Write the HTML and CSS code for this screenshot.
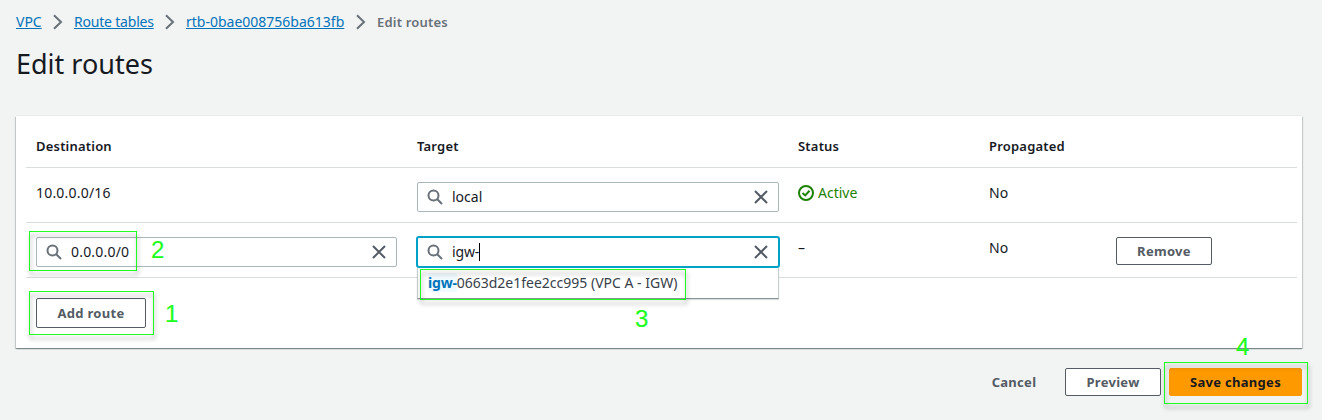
FILE: index.html
```
<!DOCTYPE html>
<html lang="en">
<head>
<meta charset="utf-8">
<title>Edit routes</title>
<link rel="stylesheet" href="styles.css">
</head>
<body>
<svg class="defs" width="0" height="0">
  <symbol id="search" viewBox="0 0 16 16"><circle cx="6.5" cy="6.5" r="5" fill="none" stroke="currentColor" stroke-width="2"/><path d="M10.3 10.3 15 15" stroke="currentColor" stroke-width="2"/></symbol>
  <symbol id="close" viewBox="0 0 16 16"><path d="M2 2 14 14M14 2 2 14" stroke="currentColor" stroke-width="2"/></symbol>
  <symbol id="chevron" viewBox="0 0 10 16"><path d="M1 1.2 8 8 1 14.8" fill="none" stroke="currentColor" stroke-width="2"/></symbol>
  <symbol id="check" viewBox="0 0 16 16"><circle cx="8" cy="8" r="7" fill="none" stroke="currentColor" stroke-width="2"/><path d="M4.5 8 7.2 10.4 11.5 5.7" fill="none" stroke="currentColor" stroke-width="2"/></symbol>
</svg>
<nav class="breadcrumbs">
  <a class="crumb vpc">VPC</a><svg class="chevron"><use href="#chevron"/></svg>
  <a class="crumb tables">Route tables</a><svg class="chevron"><use href="#chevron"/></svg>
  <a class="crumb rtb">rtb-0bae008756ba613fb</a><svg class="chevron"><use href="#chevron"/></svg>
  <span class="crumb current">Edit routes</span>
</nav>
<h1 class="title">Edit routes</h1>
<main class="panel">
  <div class="row head">
    <div>Destination</div><div>Target</div><div>Status</div><div>Propagated</div><div></div>
  </div>
  <div class="row">
    <div class="text cidr">10.0.0.0/16</div>
    <div class="field"><svg class="search"><use href="#search"/></svg><span class="value">local</span><svg class="close"><use href="#close"/></svg></div>
    <div class="text active"><svg class="check"><use href="#check"/></svg><span>Active</span></div>
    <div class="text">No</div>
    <div></div>
  </div>
  <div class="row">
    <div class="field"><svg class="search"><use href="#search"/></svg><span class="value cidr">0.0.0.0/0</span><svg class="close"><use href="#close"/></svg></div>
    <div class="combo">
      <div class="field focused"><svg class="search"><use href="#search"/></svg><span class="value typed">igw-</span><svg class="close"><use href="#close"/></svg></div>
      <div class="menu"><mark class="match">igw-</mark><span class="option">0663d2e1fee2cc995 (VPC A - IGW)</span></div>
    </div>
    <div class="text">–</div>
    <div class="text">No</div>
    <div class="cell-action"><button class="button remove">Remove</button></div>
  </div>
  <div class="add"><button class="button add-route">Add route</button></div>
</main>
<footer class="actions">
  <button class="button link">Cancel</button>
  <button class="button preview">Preview</button>
  <button class="button primary">Save changes</button>
</footer>
<div class="note box-add"></div><div class="num num-add">1</div>
<div class="note box-cidr"></div><div class="num num-cidr">2</div>
<div class="note box-igw"></div><div class="num num-igw">3</div>
<div class="note box-save"></div><div class="num num-save">4</div>
</body>
</html>
```
FILE: styles.css
```
* { box-sizing: border-box; }
body { margin: 0; height: 420px; overflow: hidden; background: #f2f3f3; color: #16191f; font: 14px/22px "Noto Sans", "Open Sans", sans-serif; padding: 11px 20px 0 16px; }
svg { display: block; flex: none; }
.defs { position: absolute; }
.breadcrumbs { display: flex; align-items: center; height: 22px; font-size: 14px; }
.crumb { color: #0073bb; text-decoration: underline; white-space: nowrap; }
.current { color: #687078; font-size: 13px; font-weight: 600; letter-spacing: .2px; text-decoration: none; }
.vpc { width: 26px; }
.tables { width: 80px; letter-spacing: -.2px; }
.rtb { width: 159px; }
.chevron { width: 10px; height: 16px; margin: 0 11px; color: #687078; }
.title { margin: 13px 0 0; font-size: 27px; line-height: 36px; font-weight: 400; }
.panel { margin-top: 34px; width: 1286px; height: 232px; padding: 10px 5px 0 10px; background: #fff; box-shadow: 0 -1px 0 #e8ebeb, 0 1px 1px 0 rgba(0,28,36,.3), 1px 1px 1px 0 rgba(0,28,36,.15), -1px 1px 1px 0 rgba(0,28,36,.15); }
.row { display: grid; grid-template-columns: 361px 362px 171px 107px 1fr; column-gap: 20px; height: 55px; padding: 14px 0 0 10px; border-bottom: 1px solid #d9dddd; }
.head { height: 42px; padding-top: 9px; font-size: 13px; font-weight: 600; letter-spacing: .2px; }
.row > :nth-child(n+3) { margin-left: -1px; }
.text { line-height: 22px; }
.cidr { letter-spacing: .2px; }
.active { display: flex; gap: 4px; color: #1d8102; }
.check { width: 16px; height: 16px; margin-top: 3px; }
.field { display: flex; align-items: center; height: 30px; padding: 0 9px; border: 1px solid #aab7b8; border-radius: 2px; background: #fff; }
.search { width: 16px; height: 16px; color: #687078; }
.close { width: 16px; height: 16px; margin-left: auto; color: #545b64; }
.value { margin-left: 9px; }
.combo { position: relative; }
.focused { border-color: #00a1c9; box-shadow: 0 0 0 1px #00a1c9; }
.typed { height: 18px; line-height: 18px; border-right: 1px solid #000; letter-spacing: -.15px; }
.menu { position: absolute; top: 31px; left: 0; width: 362px; height: 31px; padding: 4px 10px; background: #fff; border: 1px solid #c5cccc; border-top: 0; border-bottom-color: #879596; box-shadow: 0 1px 1px rgba(0,28,36,.15); white-space: nowrap; color: #38414a; }
.match { background: #f1faff; color: #0073bb; font-weight: 700; letter-spacing: -.2px; }
.button { height: 28px; padding: 0; border: 1px solid #545b64; border-radius: 2px; background: #fff; color: #545b64; font: 700 13px/26px "Noto Sans", "Open Sans", sans-serif; text-align: center; white-space: nowrap; letter-spacing: .3px; }
.remove { display: block; width: 96px; }
.add { padding: 20px 0 0 10px; }
.add-route { display: block; width: 110px; height: 30px; }
.actions { display: flex; gap: 8px; margin-top: 20px; justify-content: flex-end; width: 1286px; }
.link { width: 86px; border-color: transparent; background: transparent; }
.preview { width: 96px; }
.primary { width: 133px; background: #f90; border-color: #f90; color: #16191f; }
.note { position: absolute; border: 1px solid #1dff1d; filter: drop-shadow(1px 4px 2px rgba(0,0,0,.4)); }
.num { position: absolute; font: 24px/24px "Liberation Sans", Arial, sans-serif; color: #1dff1d; -webkit-text-stroke: .2px #1dff1d; }
.box-add { left: 29px; top: 291px; width: 125px; height: 44px; }
.box-cidr { left: 29px; top: 231px; width: 108px; height: 40px; }
.box-igw { left: 420px; top: 269px; width: 266px; height: 31px; }
.box-save { left: 1164px; top: 362px; width: 144px; height: 42px; }
.num-add { left: 165px; top: 302px; }
.num-cidr { left: 151px; top: 238px; }
.num-igw { left: 635px; top: 307px; }
.num-save { left: 1236px; top: 335px; }
```
